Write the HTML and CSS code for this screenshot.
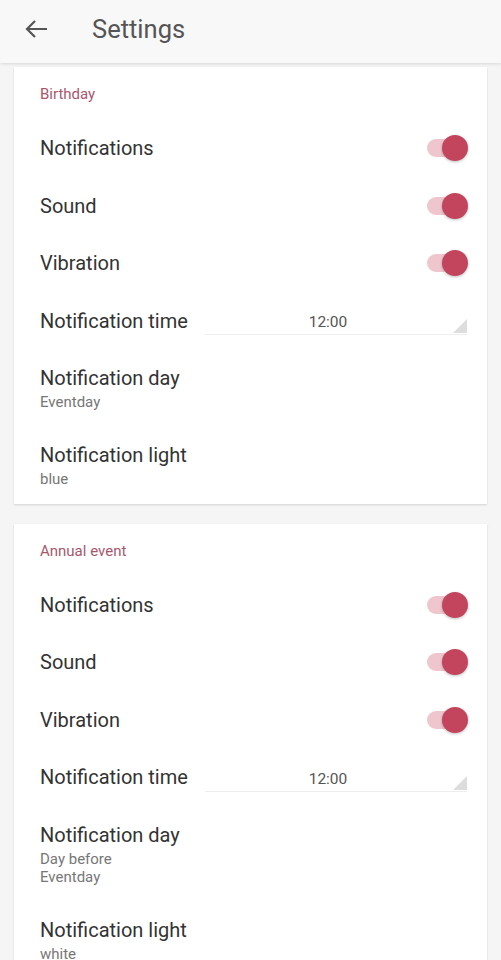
FILE: index.html
```html
<!DOCTYPE html>
<html lang="en">
<head>
    <meta charset="UTF-8">
    <title>Settings</title>
    <link rel="stylesheet" href="styles.css">
</head>
<body>
<div class="bar">
    <svg class="back" width="24" height="20" viewBox="0 0 24 20"><path d="M3 10H23M11 2L3 10L11 18" fill="none" stroke="#555" stroke-width="2.2"/></svg>
    <h1>Settings</h1>
</div>
<div class="page">
    <div class="card">
        <div class="cat">Birthday</div>
        <div class="row"><span class="label">Notifications</span><span class="sw"><i></i></span></div>
        <div class="row"><span class="label">Sound</span><span class="sw"><i></i></span></div>
        <div class="row"><span class="label">Vibration</span><span class="sw"><i></i></span></div>
        <div class="row"><span class="label">Notification time</span><span class="time">12:00</span></div>
        <div class="row2"><span class="label">Notification day</span><span class="sub">Eventday</span></div>
        <div class="row2"><span class="label">Notification light</span><span class="sub">blue</span></div>
    </div>
    <div class="card">
        <div class="cat">Annual event</div>
        <div class="row"><span class="label">Notifications</span><span class="sw"><i></i></span></div>
        <div class="row"><span class="label">Sound</span><span class="sw"><i></i></span></div>
        <div class="row"><span class="label">Vibration</span><span class="sw"><i></i></span></div>
        <div class="row"><span class="label">Notification time</span><span class="time">12:00</span></div>
        <div class="row2"><span class="label">Notification day</span><span class="sub">Day before<br>Eventday</span></div>
        <div class="row2"><span class="label">Notification light</span><span class="sub">white</span></div>
    </div>
</div>
</body>
</html>
```

FILE: styles.css
```css
*{margin:0;padding:0;box-sizing:border-box;}
body{background:#f5f5f5;font-family:Roboto,"Noto Sans",sans-serif;color:#333;}
.bar{height:63px;background:#f8f8f8;display:flex;align-items:center;padding-left:24px;
    box-shadow:0 1px 3px rgba(0,0,0,.12);position:relative;}
.bar .back{display:block;margin-top:-6px;}
.bar h1{font-size:25.5px;font-weight:400;color:#555;margin-left:44px;margin-top:-6px;}
.page{padding:4px 14px 0;}
.card{background:#fff;box-shadow:0 1px 2px rgba(0,0,0,.14);margin-bottom:20px;padding:0 20px 0 26px;}
.cat{font-size:15px;line-height:22px;color:#a8576d;padding:16px 0 14.5px;}
.row{height:57.5px;display:flex;align-items:center;justify-content:space-between;}
.label{font-size:20px;line-height:24px;color:#333;}
.row2{display:flex;flex-direction:column;padding:16.5px 0 15.5px;}
.sub{font-size:15px;line-height:18px;margin-top:3px;color:#777;}
.sw{position:relative;width:40px;height:18px;border-radius:9px;background:#efc6ce;}
.sw i{position:absolute;right:-1px;top:-4px;width:26px;height:26px;border-radius:50%;
    background:#c3455d;box-shadow:0 1px 3px rgba(0,0,0,.25);}
.time{position:relative;width:262px;height:28px;margin-top:1px;padding:3px 16px 0 0;text-align:center;
    font-size:15.5px;line-height:24px;color:#555;border-bottom:1px solid #eee;}
.time:after{content:"";position:absolute;right:0;bottom:1px;border-style:solid;border-width:0 0 14px 14px;
    border-color:transparent transparent #ddd transparent;}
```
